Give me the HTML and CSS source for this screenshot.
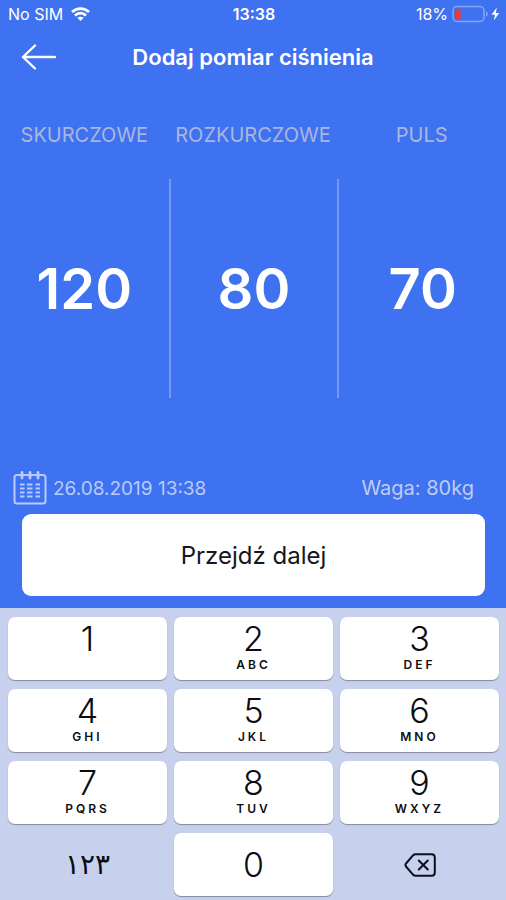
FILE: index.html
```html
<!DOCTYPE html>
<html lang="pl">
<head>
<meta charset="utf-8">
<meta name="viewport" content="width=device-width, initial-scale=1">
<title>Dodaj pomiar ciśnienia</title>
<link rel="stylesheet" href="styles.css">
</head>
<body>
<div class="app">
  <div class="status">
    <div class="status-left">
      <span>No SIM</span>
      <svg width="19" height="14" viewBox="0 0 19 14" fill="none" stroke="#fff" stroke-width="2.8">
        <path d="M1 5C5.8 .4 13.2 .4 18 5"/>
        <path d="M4 8.500C7.200 5.400 11.800 5.400 15 8.500"/>
        <path d="M6.300 10.700C8 9.300 11 9.300 12.700 10.700L9.500 14Z" fill="#fff" stroke="none"/>
      </svg>
    </div>
    <strong class="clock">13:38</strong>
    <div class="status-right">
      <span>18%</span>
      <svg width="48" height="18" viewBox="0 0 48 18">
        <rect x="1" y="1.500" width="31" height="15" rx="4" fill="none" stroke="#86a5f8" stroke-width="1.500"/>
        <path d="M34 6.500c2.300.8 2.300 4.200 0 5z" fill="#86a5f8"/>
        <path d="M4.500 4H8.500V14H4.500Q3 14 3 12.500V5.500Q3 4 4.500 4Z" fill="#fb3329"/>
        <path d="M44.800 2.500L39.500 9.800H43L41.800 15.500L47.300 8H43.800Z" fill="#fff"/>
      </svg>
    </div>
  </div>

  <header class="header">
    <button class="back" type="button" aria-label="Wstecz">
      <svg width="36" height="26" viewBox="0 0 36 26" fill="none" stroke="#fff" stroke-width="2.400" stroke-linecap="round" stroke-linejoin="round">
        <path d="M35 13H3M15 1.500L3 13L15 24.500"/>
      </svg>
    </button>
    <h1 class="title">Dodaj pomiar ciśnienia</h1>
  </header>

  <main class="readings">
    <div class="reading">
      <label for="systolic">SKURCZOWE</label>
      <input id="systolic" type="text" inputmode="numeric" value="120">
    </div>
    <div class="reading">
      <label for="diastolic">ROZKURCZOWE</label>
      <input id="diastolic" type="text" inputmode="numeric" value="80">
    </div>
    <div class="reading">
      <label for="pulse">PULS</label>
      <input id="pulse" type="text" inputmode="numeric" value="70">
    </div>
  </main>

  <div class="meta">
    <div class="date">
      <svg width="34" height="34" viewBox="0 0 34 34" fill="none" stroke="#b8cbfb" stroke-width="2">
        <rect x="1.500" y="4" width="31" height="28.500" rx="2.500"/>
        <path d="M9 1.500V7M17 1.500V7M25 1.500V7" stroke-width="2.800" stroke-linecap="round"/>
        <path d="M7 13.500H11.500M14 13.500H19.500M22.500 13.500H27M7 17.500H11.500M14 17.500H19.500M22.500 17.500H27M7 21.500H11.500M14 21.500H19.500M22.500 21.500H27M7 25.500H11.500M14 25.500H19.500M22.500 25.500H27"/>
      </svg>
      <span>26.08.2019 13:38</span>
    </div>
    <span class="weight">Waga: 80kg</span>
  </div>

  <button class="next" type="button">Przejdź dalej</button>

  <div class="keypad">
    <button class="key" type="button"><span class="digit">1</span><span class="letters"></span></button>
    <button class="key" type="button"><span class="digit">2</span><span class="letters">ABC</span></button>
    <button class="key" type="button"><span class="digit">3</span><span class="letters">DEF</span></button>
    <button class="key" type="button"><span class="digit">4</span><span class="letters">GHI</span></button>
    <button class="key" type="button"><span class="digit">5</span><span class="letters">JKL</span></button>
    <button class="key" type="button"><span class="digit">6</span><span class="letters">MNO</span></button>
    <button class="key" type="button"><span class="digit">7</span><span class="letters">PQRS</span></button>
    <button class="key" type="button"><span class="digit">8</span><span class="letters">TUV</span></button>
    <button class="key" type="button"><span class="digit">9</span><span class="letters">WXYZ</span></button>
    <button class="key key-plain" type="button"><span class="arabic">١٢٣</span></button>
    <button class="key key-zero" type="button"><span class="digit">0</span></button>
    <button class="key key-plain" type="button" aria-label="Usuń">
      <svg width="32" height="24" viewBox="0 0 32 24" fill="none" stroke="#0b0f1a" stroke-width="2" stroke-linecap="round" stroke-linejoin="round">
        <path d="M11.500 1.200H27.500Q30.800 1.200 30.800 4.500V19.500Q30.800 22.800 27.500 22.800H11.500Q10.200 22.800 9.200 21.800L2 13.500Q.9 12 2 10.500L9.200 2.200Q10.200 1.200 11.500 1.200Z"/>
        <path d="M14.800 7.500L23.800 16.500M23.800 7.500L14.800 16.500"/>
      </svg>
    </button>
  </div>
</div>
</body>
</html>
```
FILE: styles.css
```css
* {
  box-sizing: border-box;
}

body {
  margin: 0;
  background: #3f72f0;
  color: #fff;
  font-family: Inter, "Liberation Sans", sans-serif;
}

button,
input {
  font: inherit;
  color: inherit;
  border: 0;
  margin: 0;
  padding: 0;
  background: none;
}

svg {
  display: block;
}

.app {
  display: flex;
  flex-direction: column;
  min-height: 100vh;
}

.status {
  display: grid;
  grid-template-columns: 1fr auto 1fr;
  align-items: center;
  height: 28px;
  padding: 0 6px 0 8px;
  font-size: 16px;
}

.status-left,
.status-right {
  display: flex;
  align-items: center;
  gap: 8px;
}

.status-right {
  justify-content: flex-end;
  gap: 4px;
}

.clock {
  font-weight: 600;
}

.header {
  display: grid;
  grid-template-columns: 36px 1fr 36px;
  align-items: center;
  height: 58px;
  padding: 0 20px;
}

.title {
  margin: 0;
  font-size: 22px;
  font-weight: 600;
  text-align: center;
}

.readings {
  flex: 1;
  display: grid;
  grid-template-columns: repeat(3, 1fr);
  padding-top: 37px;
  padding-bottom: 72px;
}

.reading {
  display: flex;
  flex-direction: column;
  gap: 32px;
  text-align: center;
}

.reading label {
  color: #a9b7de;
  font-size: 20px;
  line-height: 24px;
}

.reading input {
  flex: 1;
  width: 100%;
  min-height: 60px;
  font-size: 56px;
  font-weight: 600;
  text-align: center;
}

.reading + .reading input {
  border-left: 2px solid #7698f3;
}

.meta {
  display: flex;
  align-items: center;
  justify-content: space-between;
  height: 36px;
  padding: 0 32px 0 13px;
  color: #b8cbfb;
  font-size: 19px;
}

.date {
  display: flex;
  align-items: center;
  gap: 6px;
}

.weight {
  color: #bfccf3;
  font-size: 20px;
}

.next {
  height: 82px;
  margin: 8px 21px 12px 22px;
  border-radius: 9px;
  background: #fff;
  color: #15171c;
  font-size: 24px;
}

.keypad {
  display: grid;
  grid-template-columns: repeat(3, 1fr);
  gap: 9px 7px;
  padding: 9px 7px 4px 8px;
  background: #c7d1ed;
}

.key {
  display: flex;
  flex-direction: column;
  align-items: center;
  height: 63px;
  padding-top: 4px;
  border-radius: 7px;
  background: #fff;
  box-shadow: 0 1px 1px #858b9c;
  color: #0b0d12;
}

.key-zero,
.key-plain {
  justify-content: center;
  padding-top: 0;
}

.key-plain {
  background: none;
  box-shadow: none;
}

.digit {
  font-size: 34px;
  font-weight: 300;
  line-height: 36px;
}

.letters {
  height: 16px;
  font-size: 12px;
  font-weight: 600;
  line-height: 16px;
  letter-spacing: 3px;
}

.arabic {
  font-family: "DejaVu Sans", sans-serif;
  font-size: 28px;
  line-height: 32px;
}
```
